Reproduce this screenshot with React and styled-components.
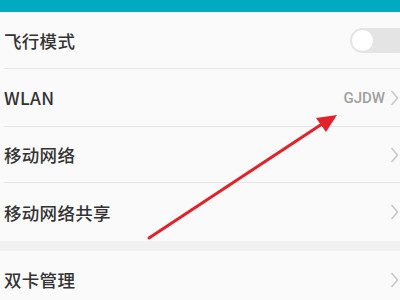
import React from "react";
import styled, { createGlobalStyle } from "styled-components";

const GlobalStyle = createGlobalStyle`
  body {
    margin: 0;
    background: #fafafa;
    font-family: "Noto Sans CJK SC", "Roboto", sans-serif;
  }
`;

const Screen = styled.div`
  position: relative;
  width: 400px;
  height: 300px;
  overflow: hidden;
  background: #fafafa;
`;

const StatusBar = styled.div`
  height: 12px;
  background: #00abc2;
`;

const Group = styled.div`
  background: #fafafa;
`;

const Row = styled.div`
  display: flex;
  align-items: center;
  justify-content: space-between;
  height: ${props => props.h || 57}px;
  margin-left: 4px;
  border-bottom: ${props => (props.last ? "none" : "1px solid #e6e6e6")};
  box-sizing: border-box;
`;

const Label = styled.span`
  font-size: 17.5px;
  font-weight: 500;
  color: #333;
  letter-spacing: 0.3px;
`;

const Right = styled.div`
  display: flex;
  align-items: center;
  gap: 5px;
`;

const Value = styled.span`
  font-family: "Roboto", sans-serif;
  font-size: 15px;
  font-weight: 500;
  color: #a0a0a0;
`;

const Chevron = styled.svg`
  width: 9px;
  height: 16px;
  margin-right: 1px;
`;

const Toggle = styled.div`
  width: 58px;
  height: 25px;
  border-radius: 13px;
  background: #e4e4e4;
  margin-right: -10px;
  display: flex;
  align-items: center;
  padding-left: 2px;
`;

const Knob = styled.div`
  width: 21px;
  height: 21px;
  border-radius: 50%;
  background: #fff;
`;

const Gap = styled.div`
  height: 10px;
  background: #f0f0f0;
`;

const Arrow = styled.svg`
  position: absolute;
  left: 0;
  top: 0;
  pointer-events: none;
`;

const Arrowhead = () => (
  <Chevron viewBox="0 0 9 16">
    <path d="M1.5 1 L7.5 8 L1.5 15" fill="none" stroke="#c8c8c8" strokeWidth="1.6" />
  </Chevron>
);

export default function App() {
  return (
    <Screen>
      <GlobalStyle />
      <StatusBar />
      <Group>
        <Row h={57}>
          <Label>飞行模式</Label>
          <Toggle><Knob /></Toggle>
        </Row>
        <Row h={58}>
          <Label>WLAN</Label>
          <Right>
            <Value>GJDW</Value>
            <Arrowhead />
          </Right>
        </Row>
        <Row h={56}>
          <Label>移动网络</Label>
          <Arrowhead />
        </Row>
        <Row h={58} last>
          <Label>移动网络共享</Label>
          <Arrowhead />
        </Row>
      </Group>
      <Gap />
      <Group>
        <Row h={57} last>
          <Label>双卡管理</Label>
          <Arrowhead />
        </Row>
      </Group>
      <Arrow width="400" height="300" viewBox="0 0 400 300">
        <line x1="149" y1="238" x2="322" y2="124" stroke="#e3212b" strokeWidth="3" strokeLinecap="round" />
        <polygon points="337,115 316,118 326,132" fill="#e3212b" />
      </Arrow>
    </Screen>
  );
}
